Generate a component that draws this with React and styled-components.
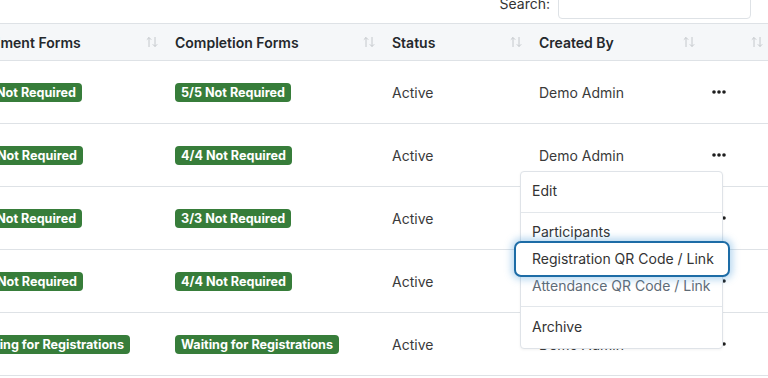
import React from "react";
import styled, { createGlobalStyle } from "styled-components";

const Global = createGlobalStyle`
  html, body { margin: 0; padding: 0; background: #fff; overflow: hidden; }
  body { font-family: "Inter", "Open Sans", sans-serif; color: #333; }
`;

const Page = styled.div`
  width: 768px;
  height: 378px;
  overflow: hidden;
`;

const Scrolled = styled.div`
  margin-top: -12px;
`;

const SearchRow = styled.div`
  display: flex;
  justify-content: flex-end;
  align-items: center;
  gap: 8px;
  padding-right: 17px;
  margin-bottom: 4px;
`;

const SearchLabel = styled.label`
  font-size: 14px;
  color: #333;
`;

const SearchInput = styled.input`
  width: 193px;
  height: 31px;
  box-sizing: border-box;
  border: 1px solid #dee2e6;
  border-radius: 4px;
  outline: none;
`;

const TableClip = styled.div`
  width: 768px;
`;

const Table = styled.table`
  border-collapse: collapse;
  table-layout: fixed;
  margin-left: -46px;
  width: 814px;
`;

const Th = styled.th`
  position: relative;
  text-align: left;
  font-size: 14px;
  font-weight: 600;
  color: #24282c;
  background: #f5f7f9;
  border-top: 1px solid #dee2e6;
  border-bottom: 1px solid #dee2e6;
  height: 37px;
  padding: 0 12px;
  box-sizing: border-box;
  white-space: nowrap;
`;

const SortIcon = styled.svg`
  position: absolute;
  right: 5px;
  top: 12px;
`;

const Td = styled.td`
  position: relative;
  font-size: 14px;
  color: #3a3a3a;
  border-bottom: 1px solid #dee2e6;
  height: 62px;
  padding: 0 12px;
  white-space: nowrap;
`;

const Badge = styled.span`
  display: inline-block;
  background: #377d3a;
  color: #fff;
  font-weight: 700;
  font-size: 12.6px;
  line-height: 19px;
  padding: 0 6px;
  border-radius: 4px;
`;

const DotsButton = styled.button`
  border: none;
  background: none;
  padding: 0;
  display: flex;
  align-items: center;
  height: 14px;
  cursor: pointer;
`;

const Menu = styled.div`
  position: absolute;
  top: 47px;
  right: 45px;
  width: 203px;
  box-sizing: border-box;
  background: #fff;
  border: 1px solid #dfe3e8;
  border-radius: 4px;
  padding: 5px 0 8px;
  z-index: 5;
  box-shadow: 0 1px 3px rgba(0, 0, 0, 0.05);
`;

const MenuItem = styled.div`
  position: relative;
  height: 27px;
  line-height: 27px;
  padding: 0 11px;
  font-size: 14px;
  color: ${(p) => (p.$faded ? "#5f6b76" : "#333")};
  white-space: nowrap;
  z-index: ${(p) => (p.$focused ? 2 : "auto")};

  ${(p) =>
    p.$focused &&
    `
    &::before {
      content: "";
      position: absolute;
      left: -7px;
      right: -8px;
      top: -4px;
      bottom: -5px;
      background: #fff;
      border: 2px solid #1d6ca6;
      border-radius: 7px;
      box-shadow: 0 0 7px 3px rgba(64, 150, 215, 0.35);
      z-index: -1;
    }
  `}
`;

const Divider = styled.div`
  height: 1px;
  background: #e3e7eb;
  margin: ${(p) => (p.$wide ? "8px 0 5px" : "7px 0 6px")};
`;

const Sort = () => (
  <SortIcon width="12" height="12" viewBox="0 0 12 12" fill="none" stroke="#c4c8cc" strokeWidth="1">
    <path d="M3 11V1.5M0.8 3.7L3 1.5l2.2 2.2" />
    <path d="M9 1v9.5M6.8 8.3L9 10.5l2.2-2.2" />
  </SortIcon>
);

const Dots = () => (
  <svg width="14" height="4" viewBox="0 0 14 4">
    <circle cx="2" cy="2" r="1.8" fill="#1e1e1e" />
    <circle cx="7" cy="2" r="1.8" fill="#1e1e1e" />
    <circle cx="12" cy="2" r="1.8" fill="#1e1e1e" />
  </svg>
);

const rows = [
  { a: "5/5 Not Required", b: "5/5 Not Required" },
  { a: "4/4 Not Required", b: "4/4 Not Required", menu: true },
  { a: "3/3 Not Required", b: "3/3 Not Required" },
  { a: "4/4 Not Required", b: "4/4 Not Required" },
  { a: "Waiting for Registrations", b: "Waiting for Registrations" },
];

const DropdownMenu = () => (
  <Menu>
    <MenuItem>Edit</MenuItem>
    <Divider $wide />
    <MenuItem>Participants</MenuItem>
    <MenuItem $focused>Registration QR Code / Link</MenuItem>
    <MenuItem $faded>Attendance QR Code / Link</MenuItem>
    <Divider />
    <MenuItem>Archive</MenuItem>
  </Menu>
);

export default function App() {
  return (
    <Page>
      <Global />
      <Scrolled>
        <SearchRow>
          <SearchLabel>Search:</SearchLabel>
          <SearchInput type="search" />
        </SearchRow>
        <TableClip>
          <Table>
            <colgroup>
              <col style={{ width: 209 }} />
              <col style={{ width: 217 }} />
              <col style={{ width: 147 }} />
              <col style={{ width: 173 }} />
              <col style={{ width: 68 }} />
            </colgroup>
            <thead>
              <tr>
                <Th>Enrolment Forms<Sort /></Th>
                <Th>Completion Forms<Sort /></Th>
                <Th>Status<Sort /></Th>
                <Th>Created By<Sort /></Th>
                <Th><Sort /></Th>
              </tr>
            </thead>
            <tbody>
              {rows.map((r, i) => (
                <tr key={i}>
                  <Td><Badge>{r.a}</Badge></Td>
                  <Td><Badge>{r.b}</Badge></Td>
                  <Td>Active</Td>
                  <Td>Demo Admin</Td>
                  <Td>
                    <DotsButton aria-label="Actions"><Dots /></DotsButton>
                    {r.menu && <DropdownMenu />}
                  </Td>
                </tr>
              ))}
            </tbody>
          </Table>
        </TableClip>
      </Scrolled>
    </Page>
  );
}
